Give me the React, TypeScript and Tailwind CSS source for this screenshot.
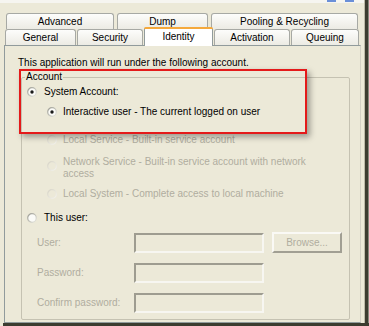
import React from "react"

function Radio({ checked = false, disabled = false }: { checked?: boolean; disabled?: boolean }) {
  return (
    <svg width="10" height="10" viewBox="0 0 10 10" className="shrink-0">
      <defs>
        <linearGradient id={disabled ? "rd" : "ra"} x1="0" y1="0" x2="1" y2="1">
          <stop offset="0" stopColor={disabled ? "#d6d3c6" : "#9a9a92"} />
          <stop offset="1" stopColor={disabled ? "#f4f3ee" : "#e8e8e0"} />
        </linearGradient>
      </defs>
      <circle cx="5" cy="5" r="4.3" fill={disabled ? "#ece9d8" : "#fbfbf8"} stroke={`url(#${disabled ? "rd" : "ra"})`} strokeWidth="1.2" />
      {checked && <circle cx="5" cy="5" r="1.7" fill="#1a1a1a" />}
    </svg>
  )
}

function Tab({ label, w, selected = false }: { label: string; w: string; selected?: boolean }) {
  if (selected) {
    return (
      <div className={`${w} relative z-10 -mt-[2px] h-[19px] -mb-[1px] rounded-t-[3px] border-x border-[#919b9c] bg-white flex flex-col`}>
        <div className="h-[2px] rounded-t-[3px] bg-[#f5a93c] -mx-[1px]" />
        <div className="flex-1 flex items-center justify-center pb-[2px] text-black">{label}</div>
      </div>
    )
  }
  return (
    <div className={`${w} h-[16px] rounded-t-[3px] border border-b-0 border-[#a7a9a4] bg-gradient-to-b from-[#fdfdfb] to-[#ecebe4] flex items-center justify-center text-black`}>
      {label}
    </div>
  )
}

function Field({ label, button = false }: { label: string; button?: boolean }) {
  return (
    <div className="flex items-center h-[20px]">
      <span className="w-[112px] pl-[15px] whitespace-nowrap text-[#b0ad9f]">{label}</span>
      <div className="w-[130px] h-[20px] border-[2px] border-t-[#9e9c90] border-l-[#9e9c90] border-b-[#f7f6f1] border-r-[#f7f6f1] bg-[#ece9d8]" />
      {button && (
        <div className="ml-[8px] w-[70px] h-[21px] -mt-[1px] border-[2px] border-t-[#faf9f5] border-l-[#faf9f5] border-b-[#a19f93] border-r-[#a19f93] bg-[#ece9d8] flex items-center justify-center text-[#b0ad9f]">
          Browse...
        </div>
      )}
    </div>
  )
}

export default function App() {
  return (
    <div
      className="relative w-[369px] h-[326px] overflow-hidden bg-[#ece9d8] flex flex-col text-[10px] leading-[12px]"
      style={{ fontFamily: '"Liberation Sans", Arial, sans-serif' }}
    >
      <div className="flex flex-1 min-h-0">
        <div className="w-[364px] flex flex-col">
          {/* window strip */}
          <div className="h-[3px] bg-[#f6f5f0] flex justify-end gap-[9px] pr-[10px]">
            <div className="w-[9px] h-[2px] bg-[#6a8fd8]" />
            <div className="w-[9px] h-[2px] bg-[#6a8fd8]" />
          </div>

          {/* tab rows */}
          <div className="mt-[10px] flex pl-[6px] gap-[3px]">
            <Tab label="Advanced" w="w-[108px]" />
            <Tab label="Dump" w="w-[91px]" />
            <Tab label="Pooling & Recycling" w="w-[147px]" />
          </div>
          <div className="flex items-end pl-[5px] gap-[1px]">
            <Tab label="General" w="w-[71px]" />
            <Tab label="Security" w="w-[66px]" />
            <Tab label="Identity" w="w-[69px]" selected />
            <Tab label="Activation" w="w-[76px]" />
            <Tab label="Queuing" w="w-[68px]" />
          </div>

          {/* panel */}
          <div className="ml-[4px] w-[357px] flex-1 border border-[#919b9c] border-r-[#d3d0c4] bg-[#ece9d8] pt-[11px] pl-[13px] flex flex-col">
            <div className="text-black">This application will run under the following account.</div>

            <fieldset className="mt-[2px] ml-[3px] w-[329px] border border-[#c5c2b2] rounded-[2px] pb-[6px] flex flex-col">
              <legend className="ml-[3px] px-[1px] text-black">Account</legend>

              <div className="mt-[3px] pl-[5px] flex items-center gap-[7px] h-[12px]">
                <Radio checked />
                <span className="text-black">System Account:</span>
              </div>
              <div className="mt-[8px] pl-[25px] flex items-center gap-[6px] h-[12px]">
                <Radio checked />
                <span className="text-black">Interactive user - The current logged on user</span>
              </div>
              <div className="mt-[16px] pl-[25px] flex items-center gap-[6px] h-[12px]">
                <Radio disabled />
                <span className="text-[#b0ad9f]">Local Service - Built-in service account</span>
              </div>
              <div className="mt-[10px] pl-[25px] flex items-start gap-[6px]">
                <div className="pt-[5px]">
                  <Radio disabled />
                </div>
                <span className="text-[#b0ad9f] w-[250px]">Network Service - Built-in service account with network access</span>
              </div>
              <div className="mt-[8px] pl-[25px] flex items-center gap-[6px] h-[12px]">
                <Radio disabled />
                <span className="text-[#b0ad9f]">Local System - Complete access to local machine</span>
              </div>
              <div className="mt-[12px] pl-[5px] flex items-center gap-[7px] h-[12px]">
                <Radio />
                <span className="text-black">This user:</span>
              </div>

              <div className="mt-[9px] flex flex-col gap-[10px]">
                <Field label="User:" button />
                <Field label="Password:" />
                <Field label="Confirm password:" />
              </div>
            </fieldset>
          </div>
        </div>
        {/* right frame */}
        <div className="w-[5px] flex">
          <div className="w-[1px] bg-[#bdbaa9]" />
          <div className="w-[3px] bg-[#3c3c30]" />
          <div className="w-[1px] bg-[#8a897e]" />
        </div>
      </div>
      <div className="h-[3px] ml-[3px] bg-[#3c3c30]" />

      {/* annotation */}
      <div className="absolute left-[19px] top-[69px] w-[288px] h-[65px] border-2 border-[#e41a1a] shadow-[3px_3px_6px_rgba(0,0,0,0.35)]" />
    </div>
  )
}
